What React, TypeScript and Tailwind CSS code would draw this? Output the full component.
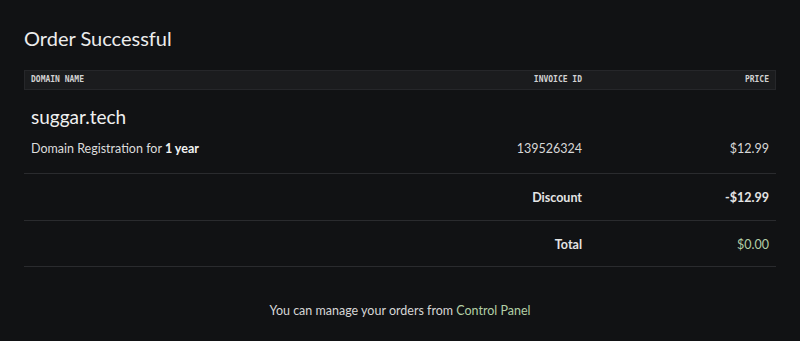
export default function App() {
  return (
    <div className="min-h-screen w-full bg-[#111214] font-['Lato',sans-serif] text-[#e6e6e6]">
      <main className="px-6 pt-[25px]">
        {/* Title */}
        <h1 className="text-[20px] leading-[26px] font-normal text-[#ececec]">
          Order Successful
        </h1>

        {/* Table header */}
        <div className="mt-[19px] grid h-[20px] grid-cols-[1fr_150px_187px] items-center border border-[#26272a] bg-[#1b1c1e] px-[6px] font-['DejaVu_Sans_Mono',monospace] text-[8px] font-bold uppercase text-[#d2d2d2]">
          <span>Domain Name</span>
          <span className="text-right">Invoice ID</span>
          <span className="text-right">Price</span>
        </div>

        {/* Domain row */}
        <div className="border-b border-[#2a2b2e] px-[7px]">
          <div className="pt-[16px] text-[19px] leading-[22px] text-[#f0f0f0]">
            suggar.tech
          </div>
          <div className="mt-[11px] grid h-[20px] grid-cols-[1fr_150px_187px] items-center text-[12.5px]">
            <span className="text-[#dcdcdc]">
              Domain Registration for{" "}
              <span className="font-bold text-[#f2f2f2]">1 year</span>
            </span>
            <span className="text-right text-[#d8d8d8]">139526324</span>
            <span className="text-right text-[#d8d8d8]">$12.99</span>
          </div>
          <div className="h-[14px]" />
        </div>

        {/* Discount */}
        <div className="grid h-[47px] grid-cols-[1fr_150px_187px] items-center border-b border-[#2a2b2e] px-[7px] pt-[3px] text-[12.5px]">
          <span />
          <span className="text-right font-bold text-[#e4e4e4]">Discount</span>
          <span className="text-right font-bold text-[#e4e4e4]">-$12.99</span>
        </div>

        {/* Total */}
        <div className="grid h-[46px] grid-cols-[1fr_150px_187px] items-center border-b border-[#2a2b2e] px-[7px] pt-[3px] text-[12.5px]">
          <span />
          <span className="text-right font-bold text-[#e4e4e4]">Total</span>
          <span className="text-right text-[#b3cfa6]">$0.00</span>
        </div>

        {/* Footer note */}
        <p className="mt-[35px] text-center text-[12.5px] text-[#d6d6d6]">
          You can manage your orders from{" "}
          <a href="#" className="text-[#b3cfa6]">
            Control Panel
          </a>
        </p>
      </main>
    </div>
  );
}
